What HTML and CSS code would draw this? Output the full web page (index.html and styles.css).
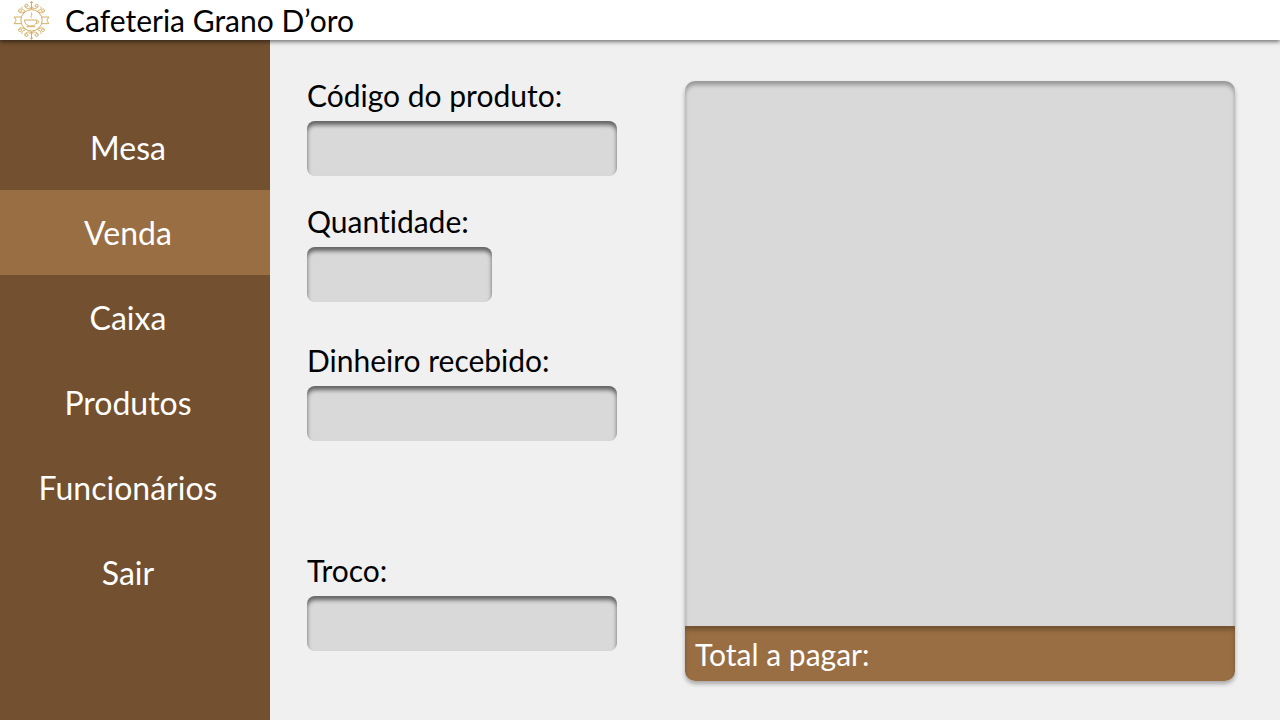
FILE: index.html
```html
<!DOCTYPE html>
<html lang="pt-BR">
<head>
<meta charset="utf-8">
<meta name="viewport" content="width=device-width, initial-scale=1">
<title>Cafeteria Grano D’oro</title>
<link rel="stylesheet" href="styles.css">
</head>
<body>
<header class="topbar">
  <svg class="logo" viewBox="40 0 110 117" aria-hidden="true">
    <circle cx="95" cy="58" r="32"/>
    <path d="M64 48H43l6 10-6 10h21M126 48h21l-6 10 6 10h-21"/>
    <path class="cup" d="M74 57h37c1 9-6 18-18 18s-19-8-19-18zM111 59c8-1 8 8-2 8M80 77h26M95 50c-5-5 4-8 0-15"/>
    <g id="flourish">
      <path d="M95 24V1M91 6l4-5 4 5M89 17l6 7 6-7"/>
      <path d="M92 23C84 24 74 21 75 14s11-5 9 1-8 2-6-1M98 23c8 1 18-2 17-9s-11-5-9 1 8 2 6-1"/>
      <path d="M78 30c-5 6-21 8-22 0s10-7 9-1-7 3-5 0M112 30c5 6 21 8 22 0s-10-7-9-1 7 3 5 0"/>
      <path d="M75 28c-8-1-12-7-7-11M115 28c8-1 12-7 7-11"/>
    </g>
    <use href="#flourish" transform="translate(0 116) scale(1 -1)"/>
  </svg>
  <h1 class="brand">Cafeteria Grano D’oro</h1>
</header>
<div class="layout">
  <nav class="sidebar">
    <a class="nav-item" href="#mesa">Mesa</a>
    <a class="nav-item active" href="#venda" aria-current="page">Venda</a>
    <a class="nav-item" href="#caixa">Caixa</a>
    <a class="nav-item" href="#produtos">Produtos</a>
    <a class="nav-item" href="#funcionarios">Funcionários</a>
    <a class="nav-item" href="#sair">Sair</a>
  </nav>
  <main class="content">
    <form class="sale-form">
      <div class="field">
        <label for="codigo">Código do produto:</label>
        <input id="codigo" type="text">
      </div>
      <div class="field quantity">
        <label for="quantidade">Quantidade:</label>
        <input id="quantidade" type="text">
      </div>
      <div class="field cash">
        <label for="dinheiro">Dinheiro recebido:</label>
        <input id="dinheiro" type="text">
      </div>
      <div class="field change">
        <label for="troco">Troco:</label>
        <input id="troco" type="text" readonly>
      </div>
    </form>
    <section class="receipt" aria-label="Itens da venda">
      <div class="receipt-items"></div>
      <p class="receipt-total">Total a pagar:</p>
    </section>
  </main>
</div>
</body>
</html>
```
FILE: styles.css
```css
* {
  box-sizing: border-box;
}

body {
  display: flex;
  flex-direction: column;
  min-height: 100vh;
  margin: 0;
  background: #f0f0f0;
  color: #000;
  font-family: Lato, "Open Sans", sans-serif;
  font-size: 30px;
  font-variant-ligatures: none;
  line-height: 40px;
}

.topbar {
  position: relative;
  z-index: 1;
  display: flex;
  align-items: center;
  gap: 15px;
  height: 40px;
  padding-left: 13px;
  background: #fff;
  box-shadow: 0 2px 4px rgba(0, 0, 0, 0.5);
}

.logo {
  width: 37px;
  height: 39px;
  fill: none;
  stroke: #d3ae62;
  stroke-width: 3;
}

.brand {
  margin: 0;
  font-size: 30px;
  font-weight: 400;
}

.layout {
  display: flex;
  flex: 1;
}

.sidebar {
  flex: 0 0 270px;
  padding-top: 65px;
  background: #725030;
}

.nav-item {
  display: flex;
  align-items: center;
  justify-content: center;
  height: 85px;
  padding-right: 14px;
  color: #fff;
  font-size: 32px;
  text-decoration: none;
}

.nav-item.active {
  background: #996e43;
}

.content {
  display: grid;
  flex: 1;
  grid-template-columns: 310px minmax(0, 1fr);
  gap: 68px;
  padding: 41px 45px 39px 37px;
}

.sale-form {
  display: flex;
  flex-direction: column;
}

.field {
  display: flex;
  flex-direction: column;
}

.field label {
  height: 40px;
  line-height: 28px;
}

.field input {
  width: 100%;
  height: 55px;
  padding: 0 12px;
  border: 0;
  border-radius: 8px;
  background: #d9d9d9;
  box-shadow: inset 0 4px 4px rgba(0, 0, 0, 0.55);
  font: inherit;
}

.quantity {
  width: 185px;
  margin-top: 31px;
}

.cash {
  margin-top: 44px;
}

.change {
  margin-top: auto;
  margin-bottom: 30px;
}

.receipt {
  display: flex;
  flex-direction: column;
  border-radius: 10px;
  box-shadow: 0 3px 4px rgba(0, 0, 0, 0.3);
}

.receipt-items {
  flex: 1;
  border-radius: 10px 10px 0 0;
  background: #d9d9d9;
  box-shadow: inset 0 4px 4px rgba(0, 0, 0, 0.3);
}

.receipt-total {
  margin: 0;
  padding: 8px 10px 7px;
  border-radius: 0 0 10px 10px;
  background: #996e43;
  box-shadow: inset 0 4px 4px rgba(0, 0, 0, 0.25);
  color: #fff;
}
```
